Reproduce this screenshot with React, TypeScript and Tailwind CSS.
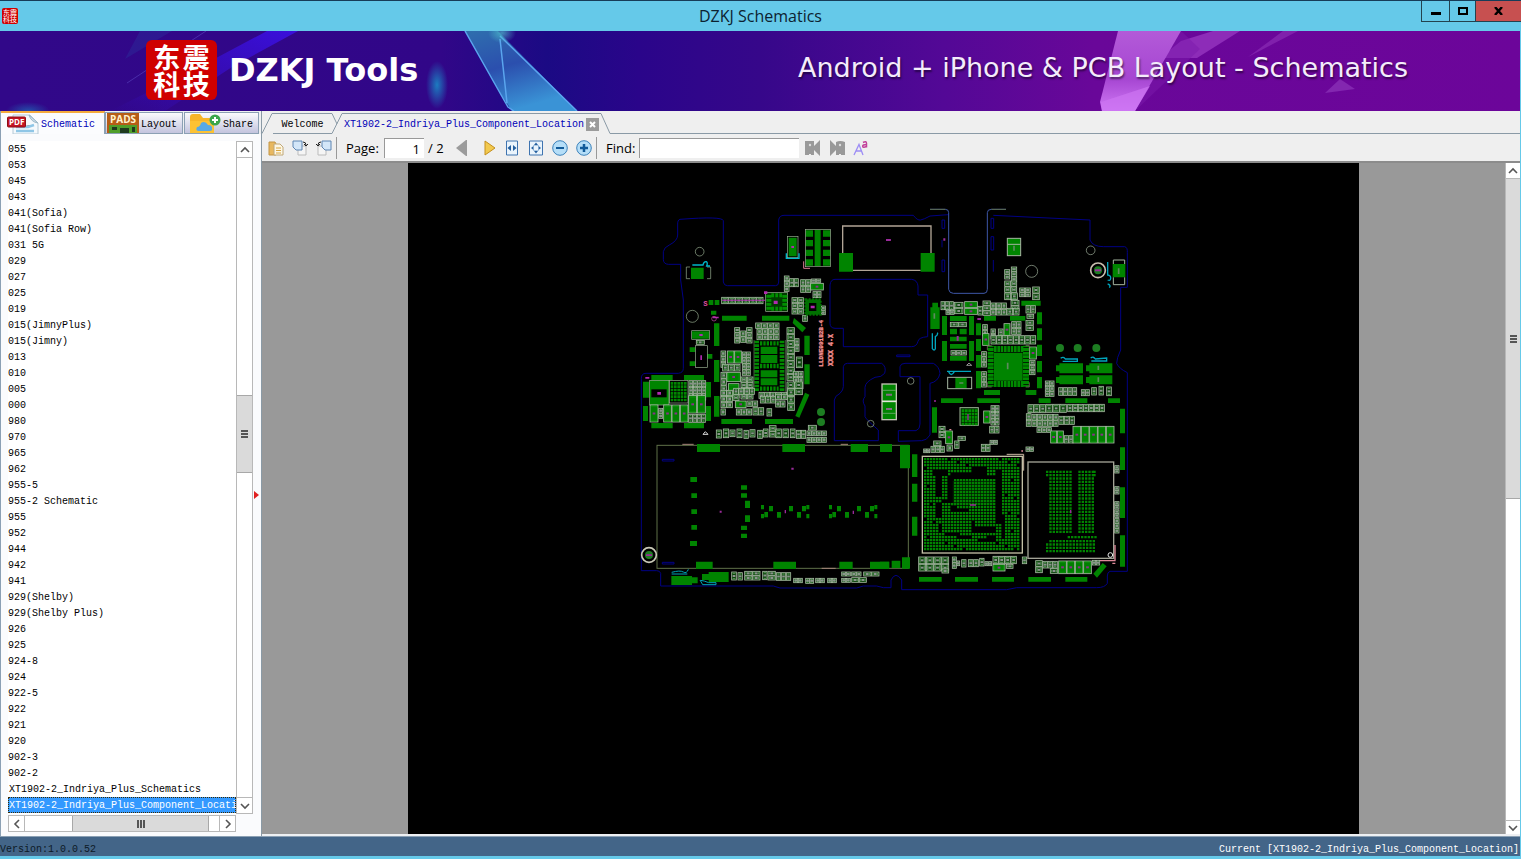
import { ReactNode } from "react"
import clsx from "clsx"

type Box = [number, number, number, number]
type Grid = [number, number, number, number, number, number]

const files = [
  "055", "053", "045", "043", "041(Sofia)", "041(Sofia Row)", "031 5G", "029", "027", "025", "019",
  "015(JimnyPlus)", "015(Jimny)", "013", "010", "005", "000", "980", "970", "965", "962", "955-5",
  "955-2 Schematic", "955", "952", "944", "942", "941", "929(Shelby)", "929(Shelby Plus)", "926",
  "925", "924-8", "924", "922-5", "922", "921", "920", "902-3", "902-2",
  "XT1902-2_Indriya_Plus_Schematics", "XT1902-2_Indriya_Plus_Component_Location",
]

const mono = "font-['Liberation_Mono','Noto_Sans_CJK_SC',monospace] text-[10px]"
const sans = "font-['Open_Sans','Noto_Sans',sans-serif]"
const wide = "font-['DejaVu_Sans',sans-serif]"

// board coordinates: three units per screen pixel, split in four quadrants
const nwPads: Box[] = [
  [627, 159, 42, 56], [476, 113, 24, 56], [527, 91, 22, 19], [527, 120, 22, 19], [527, 149, 22, 19],
  [527, 178, 22, 19], [579, 91, 22, 19], [579, 120, 22, 19], [579, 149, 22, 19], [579, 178, 22, 19],
  [554, 90, 18, 108], [183, 203, 38, 34], [276, 347, 74, 15], [396, 347, 82, 15], [252, 370, 16, 68],
  [252, 480, 16, 66], [252, 590, 16, 12], [523, 407, 16, 58], [523, 493, 16, 60], [186, 394, 52, 22],
  [179, 442, 18, 14], [179, 484, 18, 14], [231, 462, 16, 14], [64, 525, 64, 15], [162, 525, 60, 15],
  [39, 545, 18, 48], [228, 546, 15, 46], [60, 541, 57, 74], [236, 300, 14, 15], [254, 300, 14, 15],
  [243, 332, 16, 12], [392, 440, 50, 22], [392, 465, 50, 24], [392, 511, 50, 21], [392, 535, 50, 21],
]

const nePads: Box[] = [
  [122, 159, 42, 56], [382, 115, 40, 52], [698, 192, 38, 40], [424, 302, 58, 15], [151, 322, 28, 65],
  [157, 308, 17, 14], [186, 348, 15, 57], [186, 423, 15, 60], [267, 348, 15, 57], [267, 423, 15, 60],
  [288, 370, 15, 36], [288, 417, 15, 36], [288, 465, 15, 38], [288, 513, 15, 52], [210, 348, 50, 15],
  [210, 386, 21, 17], [239, 386, 21, 17], [210, 410, 50, 14], [210, 432, 50, 14], [210, 468, 50, 14],
  [312, 348, 36, 14], [390, 348, 46, 14], [471, 337, 15, 36], [471, 385, 15, 36], [471, 434, 15, 34],
  [471, 483, 15, 34], [471, 531, 15, 34], [342, 458, 86, 84], [312, 570, 48, 15], [437, 570, 32, 15],
  [538, 490, 71, 30], [528, 496, 12, 18], [628, 490, 69, 30], [618, 496, 12, 18], [538, 526, 71, 27],
  [528, 531, 12, 18], [628, 526, 69, 27], [618, 531, 12, 18], [226, 533, 34, 32],
]

const swPads: Box[] = [
  [39, 48, 15, 45], [228, 48, 15, 45], [39, -12, 15, 32], [228, -12, 15, 32], [64, 99, 64, 16],
  [162, 99, 60, 16], [252, 18, 16, 62], [274, 87, 92, 15], [405, 87, 84, 15], [201, 162, 69, 24],
  [457, 162, 68, 24], [662, 162, 52, 24], [750, 162, 36, 24], [198, 515, 50, 22], [430, 515, 68, 22],
  [628, 515, 40, 22], [720, 515, 57, 22], [181, 261, 20, 15], [184, 310, 17, 14], [184, 358, 17, 14],
  [184, 405, 17, 14], [180, 453, 21, 15], [333, 286, 18, 13], [333, 310, 18, 13], [345, 332, 15, 22],
  [345, 376, 15, 20], [333, 407, 18, 13], [333, 431, 18, 13], [124, 558, 62, 27], [184, 562, 19, 18],
  [236, 546, 60, 30], [216, 552, 24, 18],
]

const sePads: Box[] = [
  [183, 25, 66, 14], [292, 25, 68, 14], [476, 25, 36, 14], [556, 25, 66, 14], [684, 25, 36, 14],
  [156, 52, 15, 76], [96, 193, 16, 68], [96, 281, 16, 54], [96, 380, 16, 57], [720, 56, 15, 74],
  [720, 172, 15, 68], [720, 292, 15, 92], [720, 436, 15, 94], [117, 561, 68, 14], [225, 561, 69, 14],
  [336, 561, 66, 14], [445, 561, 68, 14], [556, 561, 66, 14], [0, 162, 36, 24], [60, 165, 30, 70],
  [0, 515, 28, 22], [35, 512, 26, 22], [66, 502, 24, 34],
]

const zigzag: Box[] = [
  [393, 345, 9, 13], [417, 348, 12, 16], [393, 372, 9, 13], [403, 366, 11, 16], [441, 366, 12, 17],
  [477, 348, 12, 16], [501, 366, 12, 17], [516, 348, 12, 16], [529, 345, 9, 13], [529, 372, 9, 13],
]

const nwChips: Grid[] = [
  [462, 227, 1, 3, 16, 16], [478, 235, 2, 1, 14, 26], [511, 238, 2, 2, 16, 20], [543, 236, 2, 1, 15, 12],
  [541, 249, 1, 1, 40, 22], [548, 274, 2, 1, 13, 20], [485, 292, 2, 3, 18, 17], [573, 317, 1, 2, 14, 14],
  [517, 345, 1, 1, 16, 20], [274, 291, 6, 1, 21, 21], [313, 382, 1, 3, 17, 16], [331, 392, 1, 2, 17, 18],
  [349, 382, 1, 3, 18, 16], [376, 368, 4, 1, 18, 18], [380, 386, 4, 2, 17, 17], [470, 382, 1, 8, 24, 20],
  [494, 415, 1, 2, 14, 20], [498, 470, 1, 1, 20, 34], [490, 513, 2, 3, 15, 18], [272, 452, 1, 3, 16, 17],
  [291, 452, 2, 1, 22, 38], [336, 455, 2, 4, 13, 18], [277, 492, 3, 1, 18, 22], [290, 516, 1, 1, 42, 30],
  [272, 516, 1, 4, 18, 20], [294, 550, 1, 1, 34, 44], [332, 530, 2, 4, 19, 17], [470, 545, 2, 2, 24, 20],
  [176, 541, 4, 3, 13, 20], [198, 420, 1, 1, 26, 14], [386, 576, 5, 1, 17, 20],
]

const neChips: Grid[] = [
  [373, 208, 1, 2, 17, 15], [393, 200, 1, 3, 18, 15], [373, 242, 2, 2, 19, 18], [373, 278, 2, 1, 20, 22],
  [392, 300, 1, 2, 26, 17], [418, 263, 2, 2, 17, 14], [457, 260, 1, 2, 22, 20], [182, 304, 3, 1, 13, 26],
  [197, 330, 2, 1, 13, 14], [222, 306, 1, 2, 28, 18], [253, 304, 1, 2, 40, 20], [293, 318, 1, 1, 15, 28],
  [308, 302, 1, 3, 24, 15], [332, 308, 3, 2, 16, 19], [380, 324, 2, 1, 19, 22], [437, 316, 2, 1, 15, 24],
  [440, 342, 1, 1, 22, 14], [437, 360, 1, 2, 24, 16], [307, 373, 1, 2, 16, 17], [307, 400, 1, 1, 21, 37],
  [332, 386, 1, 2, 15, 16], [354, 386, 1, 1, 16, 22], [371, 370, 1, 1, 20, 38], [394, 364, 2, 2, 15, 20],
  [332, 406, 8, 1, 17, 27], [448, 440, 1, 1, 22, 38], [448, 480, 1, 3, 18, 15], [304, 454, 1, 3, 16, 16],
  [304, 514, 1, 3, 16, 16], [495, 542, 2, 3, 14, 16], [535, 562, 4, 1, 14, 25], [603, 568, 2, 1, 13, 20],
  [634, 562, 1, 1, 16, 24], [656, 558, 1, 1, 15, 28], [679, 560, 1, 1, 16, 28], [210, 366, 2, 1, 25, 15],
  [212, 451, 3, 1, 16, 15],
]

const swChips: Grid[] = [
  [59, 44, 1, 1, 26, 53], [85, 54, 1, 2, 14, 16], [100, 44, 3, 1, 25, 53], [175, 16, 2, 1, 26, 54],
  [175, 72, 4, 1, 13, 26], [258, 119, 1, 1, 17, 26], [279, 116, 1, 1, 18, 28], [299, 119, 1, 1, 17, 22],
  [320, 116, 1, 1, 17, 28], [341, 120, 1, 1, 15, 26], [359, 118, 1, 1, 17, 24], [382, 120, 1, 1, 16, 26],
  [399, 116, 1, 1, 16, 26], [417, 106, 1, 2, 22, 18], [437, 116, 1, 1, 18, 28], [458, 116, 1, 1, 18, 28],
  [480, 116, 1, 1, 16, 28], [498, 120, 2, 1, 15, 26], [534, 105, 1, 1, 26, 16], [530, 122, 4, 1, 15, 16],
  [530, 141, 4, 1, 15, 17], [272, 0, 2, 3, 18, 18], [310, -6, 4, 1, 16, 20], [308, 14, 1, 1, 20, 18],
  [315, 32, 1, 1, 34, 22], [318, 56, 3, 1, 16, 20], [350, 32, 2, 1, 17, 18], [368, 52, 2, 1, 17, 24],
  [390, 18, 3, 1, 16, 22], [436, 12, 3, 1, 18, 18], [436, 32, 2, 1, 15, 20], [410, 55, 1, 1, 16, 24],
  [272, 56, 1, 1, 15, 20], [472, -4, 1, 3, 22, 22], [304, 545, 1, 1, 16, 26], [323, 547, 1, 1, 15, 24],
  [343, 543, 2, 2, 24, 14], [397, 543, 1, 1, 15, 27], [413, 543, 1, 2, 24, 14], [438, 547, 3, 1, 15, 25],
  [490, 564, 2, 1, 14, 15], [526, 564, 2, 1, 13, 17], [556, 564, 2, 1, 14, 15], [592, 564, 2, 1, 14, 15],
  [634, 545, 2, 1, 14, 14], [664, 545, 2, 1, 15, 14], [700, 545, 2, 1, 24, 14], [634, 564, 2, 1, 14, 14],
  [664, 562, 2, 1, 23, 16],
]

const seChips: Grid[] = [
  [310, 62, 1, 1, 21, 38], [332, 46, 2, 3, 13, 20], [328, 108, 2, 1, 15, 22], [176, 108, 1, 2, 20, 18],
  [196, 122, 1, 1, 22, 40], [233, 138, 1, 1, 24, 14], [223, 152, 1, 1, 15, 24], [160, 152, 1, 1, 24, 16],
  [152, 168, 3, 1, 14, 20], [130, 176, 2, 1, 10, 13], [200, 164, 1, 1, 18, 20], [303, 162, 2, 1, 14, 23],
  [329, 150, 2, 1, 12, 14], [437, 170, 2, 1, 12, 15], [443, 43, 3, 1, 18, 26], [497, 42, 3, 1, 21, 26],
  [562, 42, 7, 1, 16, 24], [438, 70, 1, 2, 16, 20], [455, 72, 5, 2, 16, 19], [536, 78, 3, 1, 16, 26],
  [470, 112, 3, 1, 15, 16], [511, 122, 2, 1, 20, 38], [552, 136, 2, 1, 14, 24], [578, 108, 5, 1, 25, 52],
  [115, 500, 4, 2, 23, 22], [185, 536, 1, 1, 22, 14], [216, 500, 1, 2, 14, 18], [230, 512, 1, 1, 10, 16],
  [244, 508, 1, 1, 15, 24], [264, 508, 2, 1, 16, 23], [298, 504, 1, 1, 15, 25], [314, 514, 2, 1, 11, 14],
  [338, 498, 4, 1, 18, 24], [338, 522, 1, 1, 38, 22], [378, 522, 1, 1, 22, 14], [426, 500, 1, 1, 15, 22],
  [466, 511, 1, 2, 22, 19], [488, 513, 3, 1, 15, 22], [510, 535, 1, 1, 24, 16], [535, 512, 4, 1, 25, 40],
  [636, 510, 2, 1, 12, 16], [703, 226, 1, 2, 15, 12], [703, 289, 1, 2, 15, 12], [703, 334, 1, 2, 15, 12],
  [703, 359, 1, 2, 15, 12], [703, 385, 1, 3, 15, 15],
]

// ball-free zones under the processor
const voids: Box[] = [
  [160, 240, 44, 20], [170, 256, 16, 64], [203, 252, 14, 86], [180, 325, 32, 14], [165, 340, 22, 40],
  [214, 250, 66, 12], [278, 232, 40, 38], [318, 252, 34, 12], [343, 240, 18, 136], [214, 346, 16, 20],
  [228, 354, 34, 10], [348, 376, 24, 24], [362, 390, 12, 60], [270, 392, 18, 36], [286, 410, 58, 20],
  [172, 400, 12, 30], [190, 430, 50, 10], [232, 440, 42, 10], [288, 446, 58, 10], [318, 434, 32, 24],
]

const cpuBalls = (() => {
  let d = ""
  for (let y = 204; y < 482; y += 9) {
    for (let x = 132; x < 420; x += 9) {
      const hole = voids.some(([vx, vy, w, h]) => x + 3 > vx && x + 3 < vx + w && y + 3 > vy && y + 3 < vy + h)
      const edge = x < 168 || x > 372 || y < 236 || y > 448
      if (hole || (edge && (x * 7 + y * 13) % 17 === 0)) continue
      d += `M${x} ${y}h7v7h-7z`
    }
  }
  return d
})()

const balls = (x0: number, y0: number, cols: number, rows: number, pitch: number, size: number) => {
  let d = ""
  for (let r = 0; r < rows; r++)
    for (let c = 0; c < cols; c++) d += `M${x0 + c * pitch} ${y0 + r * pitch}h${size}v${size}h-${size}z`
  return d
}

function Pads({ items }: { items: Box[] }) {
  return (
    <path
      fill="#008400"
      d={items.map(([x, y, w, h]) => `M${x} ${y}h${w}v${h}h-${w}z`).join("")}
    />
  )
}

function Chips({ items }: { items: Grid[] }) {
  return (
    <>
      {items.flatMap(([x, y, cols, rows, w, h]) =>
        Array.from({ length: cols * rows }, (_, i) => {
          const cx = x + (i % cols) * w
          const cy = y + Math.floor(i / cols) * h
          const big = w * h > 700
          return (
            <g key={`${cx}-${cy}`}>
              <rect x={cx + 1} y={cy + 1} width={w - 2} height={h - 2} fill={big ? "#008000" : "#0a420a"} stroke="#a6bba2" strokeWidth="2.5" />
              <path
                d={w > h ? `M${cx + 5} ${cy + 4}v${h - 8}M${cx + w - 5} ${cy + 4}v${h - 8}` : `M${cx + 4} ${cy + 5}h${w - 8}M${cx + 4} ${cy + h - 5}h${w - 8}`}
                stroke={big ? "#0a8a0a" : "#4d8a4d"}
                strokeWidth="4"
              />
              <rect x={cx + w / 2 - 4} y={cy + h / 2 - 3} width="8" height="6" fill={big ? "#8a2f8a" : "#8a938c"} />
            </g>
          )
        })
      )}
    </>
  )
}

function Board() {
  return (
    <svg viewBox="-666 -111 2853 1290" className="block w-full" role="img" aria-label="Component location">
      <g fill="none" stroke="#000084" strokeWidth="3">
        <path d="M150 58Q278 48 280 62V246Q282 257 292 257H437Q446 257 446 246V60Q448 46 462 46H850Q862 62 872 60T900 48L955 44M1090 46L1380 60V120Q1388 140 1420 140H1484Q1493 142 1492 158V262H1472V450Q1460 475 1460 490Q1466 505 1492 518V1114H1440Q1432 1116 1432 1128V1150Q1425 1163 1400 1163H1160L1130 1169H815V1140Q797 1112 783 1140V1163H760L740 1158H700L680 1164H450L430 1158H92V1120Q90 1112 80 1112H34V535Q34 520 48 520H145Q160 518 160 505V300L152 240V193H115Q100 192 100 178V155Q102 142 118 135Q143 122 143 105V75Q142 60 150 58" />
        <path d="M615 238H845Q862 240 864 258V285H893V410Q866 412 864 424Q860 440 845 440H640V385H615Q600 384 600 370V255Q602 238 615 238Z" />
        <path d="M640 500Q642 490 652 490H755Q770 500 764 520Q755 532 735 532Q706 545 705 562V590Q694 602 705 618V650Q710 660 745 690V722H613V600Q614 588 630 580Q640 570 640 560Z" />
        <path d="M810 500Q812 490 825 490H910Q928 500 930 520Q925 545 900 550V705Q890 722 875 722L805 724V692H858Q870 688 870 672V530H810Z" />
        <path d="M936 60V85H944V60ZM936 120V142M936 180V215H944V180ZM1083 55V85H1091V55ZM1083 110V150H1091V110ZM1090 180V215M800 465H840V470H800ZM97 778H132V783H97ZM97 1087H132V1092H97Z" />
      </g>
      <path d="M900 28H946Q956 28 956 38V268Q958 280 970 280H1062Q1072 280 1072 268V38Q1072 28 1084 28H1128" fill="none" stroke="#3e57a8" strokeWidth="3" />
      <path d="M900 28H946M1084 28H1128" fill="none" stroke="#5d6c4c" strokeWidth="3" />
      <rect x="81" y="736" width="754" height="369" fill="none" stroke="#5f7048" strokeWidth="3" />
      <path d="M638 160V78H903V160M668 211H872" fill="none" stroke="#b2a596" strokeWidth="4" />
      <path d="M157 733H191M632 733H654M575 1105H617" stroke="#a5857a" strokeWidth="3" />

      <g>
        <Pads items={nwPads} />
        <Chips items={nwChips} />
        <g fill="none" stroke="#9db395" strokeWidth="2">
          <rect x="472" y="109" width="32" height="64" />
          <rect x="526" y="88" width="75" height="112" />
          <rect x="185" y="392" width="54" height="26" />
          <rect x="59" y="541" width="58" height="74" />
          <rect x="118" y="541" width="56" height="68" />
          <rect x="196" y="437" width="36" height="65" fill="#000" />
          <path d="M180 201H169V236H180M231 201H242V236H231" />
          <circle cx="209" cy="155" r="13" />
          <circle cx="187" cy="349" r="18" />
        </g>
        <rect x="64" y="568" width="46" height="24" />
        <path d={balls(122, 546, 5, 6, 10, 8)} fill="#008400" />
        <path d="M492 354L528 384L517 397L488 369Z" fill="#008400" />
        <rect x="407" y="278" width="66" height="56" fill="#003c00" stroke="#9db395" strokeWidth="2" />
        <path d="M409 289H424M409 301H424M409 313H424M409 325H424M457 289H472M457 301H472M457 313H472M457 325H472M428 280V292M440 280V292M452 280V292M428 320V332M440 320V332M452 320V332" stroke="#009000" strokeWidth="8" />
        <rect x="526" y="298" width="46" height="46" fill="#007000" stroke="#007000" strokeDasharray="6 4" strokeWidth="6" />
        <rect x="537" y="309" width="22" height="24" />
        <path d="M380 422V576M456 422V576" stroke="#008a00" strokeWidth="14" strokeDasharray="8 3" />
        <path d="M390 430H446M390 498H446M390 566H446" stroke="#008a00" strokeWidth="13" strokeDasharray="7 3" />
        <path d="M372 420V575M466 420V575" stroke="#66805f" strokeWidth="2" />
        <g fill="#b02ab0">
          <path d="M431 302h12v10h-12zM542 317h12v8h-12zM82 576h11v8h-11zM208 402h10v6h-10zM211 466h5v14h-5zM402 274h10v8h-10zM484 138h8v6h-8zM768 117h14v6h-14zM248 350h18v5h-18zM276 299h130v3h-130zM46 531h12v5h-12z" />
        </g>
        <path d="M469 160V175H507V160M187 195H219Q221 184 229 185Q234 188 230 198H240" fill="none" stroke="#00b7c9" strokeWidth="4" />
        <path d="M521 184V205H540" fill="none" stroke="#d87a90" strokeWidth="3" />
        <g className="font-['Liberation_Mono',monospace] font-bold" fill="#f49090" stroke="#f49090" fontSize="18">
          <text x="220" y="319" fill="#e04fa0" stroke="none" fontSize="22">S</text>
          <text transform="translate(579 500) rotate(-90)">LLDNE091B2B-4</text>
          <text transform="translate(608 498) rotate(-90)" fontSize="20">XXXX 4-X</text>
        </g>
        <circle cx="252" cy="356" r="7" fill="none" stroke="#c94aa9" strokeWidth="2" />
      </g>

      <g transform="translate(750 0)">
        <Pads items={nePads} />
        <Chips items={neChips} />
        <path d="M332 437V560M438 437V560" stroke="#008a00" strokeWidth="18" strokeDasharray="9 2" strokeDashoffset="-18" />
        <path d="M342 447H430M342 552H430" stroke="#008a00" strokeWidth="18" strokeDasharray="8 2" />
        <g fill="none" stroke="#a5b5a0" strokeWidth="3">
          <path d="M322 450V437H335M437 437H448V450M322 547V561H335M437 561H448V547" stroke="#8f7f6f" strokeWidth="2" />
          <rect x="382" y="115" width="40" height="52" />
          <path d="M382 133H422M700 192V180H734V192M700 232V254H734V232" />
          <rect x="203" y="532" width="72" height="34" />
          <circle cx="455" cy="214" r="18" strokeWidth="2" />
          <circle cx="632" cy="151" r="13" strokeWidth="2" />
          <circle cx="92" cy="543" r="10" strokeWidth="2" />
          <circle cx="654" cy="211" r="22" stroke="#c9bfb0" strokeWidth="5" />
          <path d="M260 496H275L267 489Z" stroke="#ddd" strokeWidth="2" />
        </g>
        <g fill="#1d7d22">
          <circle cx="654" cy="211" r="12" />
          <circle cx="540" cy="444" r="12" />
          <circle cx="593" cy="444" r="12" />
          <circle cx="649" cy="444" r="12" />
        </g>
        <rect x="6" y="552" width="43" height="107" fill="#008400" stroke="#c2c2b4" strokeWidth="4" />
        <path d="M6 604H49" stroke="#e5e5dd" strokeWidth="5" />
        <path d="M8 571H47M8 640H47" stroke="#90b090" strokeWidth="2" />
        <path d="M18 584H36M18 627H36" stroke="#8a6a8a" strokeWidth="6" />
        <path d="M683 186V225Q693 226 692 235T683 240M683 252Q694 255 688 263M201 514H273M206 515Q213 532 223 515M157 400V446Q163 454 166 446V410Q175 404 172 398M542 475Q550 468 556 477H592V484H548M632 474Q640 468 646 477L680 474V483H634" fill="none" stroke="#00a5bc" strokeWidth="4" />
        <path d="M18 117h14v6h-14zM190 115h6v7h-6zM645 208h18v6h-18zM292 354h11v6h-11zM230 408h6v14h-6z" fill="#9a2a9a" />
        <path d="M383 488V508M716 205V222M655 497V510M655 532V546M163 340V356M402 137V152M238 549H250" stroke="#5e8a5e" strokeWidth="5" />
      </g>

      <g transform="translate(0 570)">
        <Pads items={swPads} />
        <Pads items={zigzag} />
        <g transform="translate(204 0)">
          <Pads items={zigzag} />
        </g>
        <Chips items={swChips} />
        <path d="M525 8L538 14L508 83L496 78Z" fill="#008400" />
        <g fill="#1d7d22">
          <circle cx="573" cy="66" r="12" />
          <circle cx="573" cy="96" r="12" />
          <circle cx="57" cy="495" r="12" />
        </g>
        <circle cx="57" cy="495" r="22" fill="none" stroke="#c9c9b8" strokeWidth="5" />
        <circle cx="722" cy="101" r="10" fill="none" stroke="#9db395" strokeWidth="2" />
        <path d="M219 133H234L226 125Z" fill="none" stroke="#ddd" strokeWidth="3" />
        <path d="M125 552H172M125 547Q150 540 160 546T175 538M210 570L218 584H258V578H236Q222 572 212 571" fill="none" stroke="#00a5b7" strokeWidth="3" />
        <path d="M484 233h7v6h-7zM269 362h6v6h-6zM464 360h4v10h-4zM668 362h4v10h-4zM48 493h18v5h-18z" fill="#9a2a9a" />
      </g>

      <g transform="translate(750 570)">
        <Pads items={sePads} />
        <Chips items={seChips} />
        <rect x="127" y="199" width="300" height="290" fill="none" stroke="#c3bfa6" strokeWidth="4" />
        <path d="M380 193H431V242" fill="none" stroke="#cbb7a4" strokeWidth="3" />
        <path d={cpuBalls} fill="#008400" />
        <rect x="218" y="272" width="124" height="74" fill="#008400" opacity="0.2" />
        <path d="M270 345H288" stroke="#b02ab0" strokeWidth="4" />
        <rect x="444" y="216" width="257" height="289" fill="none" stroke="#a3a396" strokeWidth="4" />
        <g fill="#008400">
          <path d={balls(508, 242, 7, 19, 10, 7)} />
          <path d={balls(595, 242, 5, 19, 10, 7)} />
          <path d={balls(498, 242, 1, 2, 10, 7)} />
          <path d={balls(640, 242, 1, 2, 10, 7)} />
          <path d={balls(563, 438, 9, 1, 10, 7)} />
          <path d={balls(508, 450, 6, 1, 10, 7)} />
          <path d={balls(498, 460, 15, 3, 10, 7)} />
          <path d={balls(568, 450, 8, 1, 10, 7)} />
          <path d="M640 551L668 519L680 529L651 563Z" />
        </g>
        <rect x="240" y="53" width="55" height="53" fill="#002a00" stroke="#9db395" strokeWidth="3" />
        <path d={balls(245, 58, 5, 5, 10, 8)} fill="#009000" />
        <path d="M264 72V90M572 360V370M162 33H168" stroke="#9a2a9a" strokeWidth="4" />
        <circle cx="691" cy="495" r="7" fill="none" stroke="#e8e8e8" strokeWidth="3" />
        <path d="M705 465V512H660M697 520H706M424 183H429M208 119H214" fill="none" stroke="#e08a9a" strokeWidth="4" />
      </g>
    </svg>
  )
}

function BannerArt() {
  return (
    <svg viewBox="0 0 1520 80" preserveAspectRatio="none" className="absolute inset-0 h-full w-full" aria-hidden="true">
      <defs>
        <linearGradient id="sky">
          <stop offset="0" stopColor="#310889" />
          <stop offset="0.29" stopColor="#310688" />
          <stop offset="0.36" stopColor="#1b0a84" />
          <stop offset="0.42" stopColor="#2a058a" />
          <stop offset="0.5" stopColor="#36078a" />
          <stop offset="0.62" stopColor="#530896" />
          <stop offset="0.72" stopColor="#690799" />
          <stop offset="1" stopColor="#6c059a" />
        </linearGradient>
        <linearGradient id="shard" x1="0" y1="0" x2="0.4" y2="1">
          <stop offset="0" stopColor="#2f6fae" />
          <stop offset="0.5" stopColor="#2b4fae" />
          <stop offset="1" stopColor="#3a93d6" />
        </linearGradient>
        <linearGradient id="beam" x1="1" y1="0" x2="0" y2="1">
          <stop offset="0" stopColor="#3a10dc" />
          <stop offset="1" stopColor="#3a10dc" stopOpacity="0" />
        </linearGradient>
        <linearGradient id="pink" x1="0" y1="0" x2="0" y2="1">
          <stop offset="0" stopColor="#b35ad8" />
          <stop offset="0.6" stopColor="#a646d2" />
          <stop offset="1" stopColor="#cf78f5" />
        </linearGradient>
        <radialGradient id="glow">
          <stop offset="0" stopColor="#1c7cc0" />
          <stop offset="1" stopColor="#1c7cc0" stopOpacity="0" />
        </radialGradient>
        <radialGradient id="flare">
          <stop offset="0" stopColor="#4fc6cf" />
          <stop offset="1" stopColor="#4fc6cf" stopOpacity="0" />
        </radialGradient>
      </defs>
      <rect width="1520" height="80" fill="url(#sky)" />
      <path d="M267 0H298L232 36L165 80H110L218 26Z" fill="url(#beam)" />
      <path d="M140 0H172L125 28Z" fill="#2a3aa0" opacity="0.35" />
      <path d="M206 0L127 52" stroke="#5b46c0" strokeWidth="1" opacity="0.6" />
      <ellipse cx="28" cy="80" rx="22" ry="9" fill="url(#glow)" opacity="0.6" />
      <ellipse cx="437" cy="54" rx="11" ry="24" fill="url(#glow)" />
      <path d="M465 0H498L577 80H512L500 62Z" fill="url(#shard)" />
      <path d="M465 0L500 62L508 76L514 80M500 5L577 80M500 8L507 72" fill="none" stroke="#5aa5ee" strokeWidth="1.5" />
      <ellipse cx="502" cy="2" rx="14" ry="10" fill="url(#flare)" opacity="0.7" />
      <path d="M1213 0H1240L1197 27H1160L1181 10Z" fill="#8d2cb8" />
      <path d="M1181 0L1200 18L1135 80Z" fill="#7b1aac" opacity="0.5" />
      <path d="M1118 0H1181L1135 80H1102L1100 71Z" fill="url(#pink)" />
      <path d="M1101 71L1150 55L1135 80H1102Z" fill="#cd75f2" opacity="0.7" />
      <path d="M1283 0H1298L1248 26Z" fill="#8020ac" />
      <path d="M1340 48L1355 58L1325 62Z" fill="#8327b0" />
    </svg>
  )
}

function Seal({ small = false }: { small?: boolean }) {
  return (
    <div
      className={clsx(
        "grid grid-cols-2 place-content-center justify-items-center bg-[#cf0000] font-['Noto_Sans_CJK_SC',sans-serif] text-white",
        small ? "h-4 w-4 rounded-xs px-px text-[7px] leading-[7px]" : "h-[60px] w-[71px] rounded-md px-1.5 text-[27px] leading-[27px] font-bold"
      )}
    >
      <span>东</span>
      <span>震</span>
      <span>科</span>
      <span>技</span>
    </div>
  )
}

function Chevron({ d }: { d: string }) {
  return (
    <svg viewBox="0 0 10 10" className="h-2.5 w-2.5" fill="none" stroke="#555" strokeWidth="1.6">
      <path d={d} />
    </svg>
  )
}

const up = "M1 7L5 3L9 7"
const down = "M1 3L5 7L9 3"
const left = "M7 1L3 5L7 9"
const right = "M3 1L7 5L3 9"

function Grip() {
  return (
    <div className="flex h-2 w-[7px] flex-col justify-between">
      <div className="h-0.5 bg-[#555]" />
      <div className="h-0.5 bg-[#555]" />
      <div className="h-0.5 bg-[#555]" />
    </div>
  )
}

function ToolButton({ label, className, children }: { label: string; className?: string; children: ReactNode }) {
  return (
    <button type="button" aria-label={label} className={clsx("h-4 w-4 shrink-0", className)}>
      <svg viewBox="0 0 16 16" className="h-4 w-4">
        {children}
      </svg>
    </button>
  )
}

function SideTab({ label, active, className, children }: { label: string; active?: boolean; className?: string; children: ReactNode }) {
  return (
    <button
      type="button"
      role="tab"
      aria-selected={!!active}
      className={clsx(
        "flex items-center gap-0.5 overflow-hidden",
        mono,
        active
          ? "h-[23px] border-t-2 border-r border-t-[#f5ab3d] border-r-[#8ba0b4] bg-[#fbfcfe] pl-1.5 text-[#0000b8]"
          : "mt-px h-[22px] border border-[#8ba0b4] bg-linear-to-b from-[#fbfbfd] to-[#c3c4de] text-black",
        className
      )}
    >
      {children}
      <span className="pt-0.5">{label}</span>
    </button>
  )
}

function Sidebar() {
  return (
    <aside className="flex w-[261px] shrink-0 flex-col border-l border-[#8ba0b4] bg-[#fafbfd]">
      <div role="tablist" className="flex h-[23px] shrink-0 bg-[#eff0f2]">
        <SideTab label="Schematic" active className="w-[104px]">
          <svg viewBox="0 0 32 20" className="h-5 w-8">
            <path d="M6 1H23L31 9V20H6Z" fill="#f4f9fc" stroke="#b4c9d6" />
            <path d="M22 1Q24 8 31 9Z" fill="#cfe0ea" stroke="#9cb8c8" />
            <path d="M9 13H21L27 11M9 17H27" stroke="#8fc6e6" strokeWidth="2.5" />
            <rect x="0.5" y="3" width="18" height="10" rx="1" fill="#c31422" stroke="#8f0c16" />
            <text x="2" y="11" fontSize="8" fontWeight="bold" fill="#fff" fontFamily="Open Sans">PDF</text>
          </svg>
        </SideTab>
        <SideTab label="Layout" className="w-[78px] pl-px">
          <svg viewBox="0 0 32 20" className="h-5 w-8">
            <rect width="32" height="20" fill="#b65d17" />
            <text x="3" y="10" fontSize="10" fontWeight="bold" fill="#fff3d0" fontFamily="Open Sans">PADS</text>
            <rect x="2" y="12" width="28" height="8" fill="#4f9e2a" />
            <path d="M5 14h5v3h-5zM13 15h9v5h-9zM25 14h3v5h-3z" fill="#1e3a1e" />
          </svg>
        </SideTab>
        <SideTab label="Share" className="ml-px w-[75px] pl-0.5">
          <svg viewBox="0 0 34 20" className="h-5 w-[34px]">
            <path d="M3 4Q3 1 6 1H13L16 5H25Q27 5 27 8V20H3Z" fill="#f7b52a" />
            <path d="M3 8H27V20H3Z" fill="#fcc233" />
            <path d="M12 18Q8 18 10 14Q13 14 14 10Q18 7 21 12Q26 12 25 17Q25 18 22 18Z" fill="#57a9e6" />
            <circle cx="28" cy="7" r="5.5" fill="#3ba64b" />
            <path d="M28 4V10M25 7H31" stroke="#fff" strokeWidth="2" />
          </svg>
        </SideTab>
      </div>

      <div className="relative flex min-h-0 flex-1 flex-col pt-[7px] pr-2 pb-1 pl-[7px]">
        <div className="flex min-h-0 flex-1">
          <ul className="min-w-0 flex-1 overflow-hidden bg-white">
            {files.map((name, i) => (
              <li key={name}>
                <button
                  type="button"
                  className={clsx(
                    "block h-4 w-full overflow-hidden pt-px text-left leading-4 whitespace-nowrap",
                    mono,
                    i === files.length - 1
                      ? "bg-[#3399ff] pl-px text-white outline-1 -outline-offset-1 outline-dotted outline-[#3a2a00]"
                      : "text-black",
                    i === files.length - 2 && "pl-px"
                  )}
                >
                  {name}
                </button>
              </li>
            ))}
          </ul>
          <div className="flex w-[17px] shrink-0 flex-col border border-[#b8b8b8] bg-white">
            <button type="button" aria-label="Scroll up" className="grid h-4 place-items-center border-b border-[#b8b8b8]">
              <Chevron d={up} />
            </button>
            <div className="grow-[237]" />
            <div className="grid h-[78px] place-items-center border-y border-[#a8a8a8] bg-[#dadada]">
              <Grip />
            </div>
            <div className="grow-[325]" />
            <button type="button" aria-label="Scroll down" className="grid h-4 place-items-center border-t border-[#b8b8b8]">
              <Chevron d={down} />
            </button>
          </div>
        </div>
        <div className="mt-px mr-[17px] flex h-[17px] shrink-0 border border-[#b8b8b8] bg-white">
          <button type="button" aria-label="Scroll left" className="grid w-4 place-items-center border-r border-[#b8b8b8]">
            <Chevron d={left} />
          </button>
          <div className="w-[47px]" />
          <div className="flex flex-1 items-center justify-center gap-px border-x border-[#a8a8a8] bg-[#dadada]">
            <div className="h-2 w-0.5 bg-[#555]" />
            <div className="h-2 w-0.5 bg-[#555]" />
            <div className="h-2 w-0.5 bg-[#555]" />
          </div>
          <div className="w-2.5" />
          <button type="button" aria-label="Scroll right" className="grid w-4 place-items-center border-l border-[#b8b8b8]">
            <Chevron d={right} />
          </button>
        </div>
        <svg viewBox="0 0 5 8" className="absolute top-1/2 right-0.5 mt-1.5 h-2 w-[5px]">
          <path d="M0 0L5 4L0 8Z" fill="#e02020" />
        </svg>
      </div>
    </aside>
  )
}

function DocumentTabs() {
  return (
    <div role="tablist" className={clsx("flex h-[23px] shrink-0 bg-[#efefef] pt-0.5", mono)}>
      <svg viewBox="0 0 11 21" className="h-[21px] w-[11px]" fill="none" stroke="#8a9aa6">
        <path d="M0 20.5L10 .5H11" />
      </svg>
      <button type="button" role="tab" aria-selected={false} className="w-[59px] border-y border-[#8a9aa6] pt-0.5 text-center text-black">
        Welcome
      </button>
      <svg viewBox="0 0 11 21" className="h-[21px] w-[11px]" fill="none" stroke="#8a9aa6">
        <path d="M0 .5L5 11M0 20.5L10 .5H11" />
      </svg>
      <button type="button" role="tab" aria-selected className="border-t border-[#8a9aa6] pt-px pl-px text-[#0000b8]">
        XT1902-2_Indriya_Plus_Component_Location
      </button>
      <div className="border-t border-[#8a9aa6] px-0.5 pt-1">
        <button type="button" aria-label="Close tab" className="grid h-[13px] w-[13px] place-items-center bg-[#9b9b9b]">
          <svg viewBox="0 0 7 7" className="h-[7px] w-[7px]" stroke="#fff" strokeWidth="2">
            <path d="M1 1L6 6M6 1L1 6" />
          </svg>
        </button>
      </div>
      <svg viewBox="0 0 10 21" className="h-[21px] w-2.5" fill="none" stroke="#8a9aa6">
        <path d="M0 .5L9 20.5H10" />
      </svg>
      <div className="flex-1 border-b border-[#8a9aa6]" />
    </div>
  )
}

function Toolbar() {
  return (
    <div className={clsx("flex h-[27px] shrink-0 items-center bg-[#efefef] pl-1.5 text-[13px] text-black", sans)}>
      <ToolButton label="Open">
        <path d="M1 2H7L8 4V15H1Z" fill="#e8b860" stroke="#c39545" />
        <path d="M6 4H12L15 7V15H6Z" fill="#fdf7e6" stroke="#c0a878" />
        <path d="M8 8H13M8 10.5H13M8 13H13" stroke="#d8a640" />
      </ToolButton>
      <ToolButton label="Rotate right" className="ml-2">
        <path d="M6 6H14V15H6Z" fill="#f5f5f5" stroke="#bbb" />
        <path d="M1 1H10V10H4L1 7Z" fill="#d3e6f8" stroke="#5f86b3" />
        <path d="M11 2Q14 2 14 5M12 4L14 6L16 4" fill="none" stroke="#222" />
      </ToolButton>
      <ToolButton label="Rotate left" className="ml-2">
        <path d="M2 6H10V15H2Z" fill="#f5f5f5" stroke="#bbb" />
        <path d="M6 1H15V10H9L6 7Z" fill="#d3e6f8" stroke="#5f86b3" />
        <path d="M5 2Q2 2 2 5M0 4L2 6L4 4" fill="none" stroke="#222" />
      </ToolButton>
      <div className="ml-1 h-[22px] w-px bg-[#999]" />
      <label htmlFor="page" className="ml-[9px] w-[38px] pt-0.5">Page:</label>
      <input id="page" defaultValue="1" className="h-5 w-10 border-t border-l border-[#999] bg-white pt-px pr-1 text-right text-[13px]" />
      <span className="ml-1 w-[26px] pt-0.5 whitespace-nowrap">/ 2</span>
      <ToolButton label="Previous page">
        <path d="M13 0V16H12L2 8L12 0Z" fill="#9b9b9b" />
      </ToolButton>
      <ToolButton label="Next page" className="ml-[11px]">
        <path d="M4 1L14 8L4 15Z" fill="#f2c94e" stroke="#c48f1e" />
      </ToolButton>
      <ToolButton label="Fit width" className="ml-[7px]">
        <path d="M2.500 1H13.500V15H2.500Z" fill="#eaf4fc" stroke="#3f74b0" />
        <path d="M7 5V11L3.500 8ZM9 5V11L12.500 8Z" fill="#245f9e" />
      </ToolButton>
      <ToolButton label="Fit page" className="ml-2">
        <path d="M1.500 1H14.500V15H1.500Z" fill="#eaf4fc" stroke="#3f74b0" />
        <path d="M8 2.500L10 5H6ZM8 13.500L10 11H6ZM3 8L5.500 6V10ZM13 8L10.500 6V10Z" fill="#245f9e" />
        <path d="M5.500 5.500H10.500V10.500H5.500Z" fill="none" stroke="#6a9ac8" strokeDasharray="1 1" />
      </ToolButton>
      <ToolButton label="Zoom out" className="ml-2">
        <circle cx="8" cy="8" r="7.300" fill="#b5def8" stroke="#3c82bb" />
        <path d="M4 8H12" stroke="#125b9a" strokeWidth="2" />
      </ToolButton>
      <ToolButton label="Zoom in" className="ml-2">
        <circle cx="8" cy="8" r="7.300" fill="#b5def8" stroke="#3c82bb" />
        <path d="M4 8H12M8 4V12" stroke="#125b9a" strokeWidth="2.500" />
      </ToolButton>
      <div className="ml-1 h-[22px] w-px bg-[#999]" />
      <label htmlFor="find" className="ml-[9px] w-[33px] pt-0.5">Find:</label>
      <input id="find" className="h-5 w-40 border-t border-l border-[#999] bg-white px-1 text-[13px]" />
      <ToolButton label="Find previous" className="ml-1.5">
        <path d="M0 1H9V6L15 0V16L9 10V15H6V14H4V15H0Z" fill="#999" />
        <circle cx="5" cy="5" r="1.200" fill="#ddd" />
      </ToolButton>
      <ToolButton label="Find next" className="ml-2">
        <path d="M16 2Q11 0 7 2V6L1 0V16L7 10V15H10V14H12V15H16Z" fill="#999" />
        <circle cx="11" cy="5" r="1.200" fill="#ddd" />
      </ToolButton>
      <ToolButton label="Match case" className="ml-2">
        <path d="M1 15L6 4.500L10 15M3 11H9" fill="none" stroke="#9d8df5" strokeWidth="1.300" />
        <path d="M10 2.500Q13.500 .5 13.500 3.500V7.500M13.500 4.500Q9.500 4.500 9.700 6.300T13.500 6.500" fill="none" stroke="#c2409a" strokeWidth="1.500" />
      </ToolButton>
    </div>
  )
}

function Viewer() {
  return (
    <main className="flex min-w-0 flex-1 flex-col border-l border-[#8a9aa6]">
      <DocumentTabs />
      <Toolbar />
      <div className="flex min-h-0 flex-1 border-t-2 border-b-2 border-t-[#8c8c8c] border-b-[#eef0f3] bg-[#999]">
        <div className="min-w-0 flex-1">
          <div className="mx-auto h-full max-w-[951px] overflow-hidden bg-black">
            <Board />
          </div>
        </div>
        <div className="flex w-[15px] shrink-0 flex-col border-l border-[#b8b8b8] bg-white">
          <button type="button" aria-label="Scroll up" className="grid h-4 place-items-center border-b border-[#b8b8b8]">
            <Chevron d={up} />
          </button>
          <div className="grid grow-[320] basis-0 place-items-center border-b border-[#a8a8a8] bg-[#dadada]">
            <Grip />
          </div>
          <div className="grow-[322] basis-0" />
          <button type="button" aria-label="Scroll down" className="grid h-3.5 place-items-center border-t border-[#b8b8b8]">
            <Chevron d={down} />
          </button>
        </div>
      </div>
    </main>
  )
}

export default function App() {
  return (
    <div className="flex h-screen min-w-[900px] flex-col overflow-hidden border-b-[3px] border-[#65c9e9] bg-[#efefef]">
      <header className="flex h-[31px] shrink-0 items-center border-t border-[#173c58] bg-[#65c9e9]">
        <div className="w-[100px] pl-0.5">
          <Seal small />
        </div>
        <h1 className={clsx("flex-1 text-center text-[16px] leading-6 text-[#0c2230]", sans)}>DZKJ Schematics</h1>
        <div className="flex h-[21px] self-start border-b border-l border-[#23424f]">
          <button type="button" aria-label="Minimize" className="grid w-7 place-items-center border-r border-[#23424f]">
            <span className="mt-1 h-[3px] w-2.5 bg-black" />
          </button>
          <button type="button" aria-label="Maximize" className="grid w-[26px] place-items-center border-r border-[#23424f]">
            <span className="h-2 w-2.5 border-2 border-black" />
          </button>
          <button type="button" aria-label="Close" className="grid w-[45px] place-items-center bg-[#c75050]">
            <svg viewBox="0 0 9 8" className="h-2 w-[9px]" stroke="#000" strokeWidth="2.400">
              <path d="M1 0L8 8M8 0L1 8" />
            </svg>
          </button>
        </div>
      </header>

      <div className="flex min-h-0 flex-1 flex-col border-r border-[#65c9e9]">
        <section className="relative h-20 shrink-0 overflow-hidden bg-[#310889]">
          <BannerArt />
          <div className="relative flex h-full items-center justify-between pr-[112px] pb-0.5 pl-[146px] text-white">
            <div className="flex items-center gap-3">
              <Seal />
              <span className={clsx("text-[32px] leading-9 font-bold whitespace-nowrap", wide)}>DZKJ Tools</span>
            </div>
            <p className={clsx("pb-1 text-[27px] leading-9 whitespace-nowrap text-[#f4ecfb] text-shadow-[1px_2px_2px_rgb(0_0_0/0.5)]", wide)}>
              Android + iPhone &amp; PCB Layout - Schematics
            </p>
          </div>
        </section>

        <div className="flex min-h-0 flex-1">
          <Sidebar />
          <Viewer />
        </div>

        <footer className={clsx("flex h-5 shrink-0 items-center justify-between border-t border-[#8ba0b4] bg-[#436588] pt-1.5 pr-px", mono)}>
          <span className="text-[#0d1a26]">Version:1.0.0.52</span>
          <span className="text-white">Current [XT1902-2_Indriya_Plus_Component_Location]</span>
        </footer>
      </div>
    </div>
  )
}
